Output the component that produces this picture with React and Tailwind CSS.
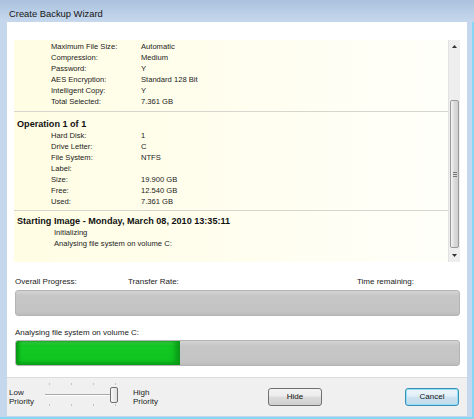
export default function App() {
  const top = [
    ["Maximum File Size:", "Automatic"],
    ["Compression:", "Medium"],
    ["Password:", "Y"],
    ["AES Encryption:", "Standard 128 Bit"],
    ["Intelligent Copy:", "Y"],
    ["Total Selected:", "7.361 GB"],
  ];
  const op = [
    ["Hard Disk:", "1"],
    ["Drive Letter:", "C"],
    ["File System:", "NTFS"],
    ["Label:", ""],
    ["Size:", "19.900 GB"],
    ["Free:", "12.540 GB"],
    ["Used:", "7.361 GB"],
  ];
  const Row = ({ l, v }) => (
    <div className="grid grid-cols-[90px_1fr] pl-[37px] h-[11px] leading-[11px]">
      <span>{l}</span>
      <span>{v}</span>
    </div>
  );
  return (
    <div className="relative w-[474px] h-[419px] overflow-hidden bg-[#c4d7ed] shadow-[inset_-2px_-2px_0_#86d8f3] font-['Liberation_Sans',Arial,sans-serif] text-[#1b1b1b]">
      <div className="h-[22px] pt-[8px] pl-[9px] text-[9.4px] leading-[12px] text-[#151515] bg-[linear-gradient(to_bottom,#aac2df,#c6d8ed)]">
        Create Backup Wizard
      </div>
      <div className="ml-[7px] w-[460px] h-[394px] bg-white flex flex-col">
        {/* details pane */}
        <div className="pt-[18px] pl-[7px] pr-[7px]">
          <div className="flex h-[222px]">
            <div className="flex-1 bg-[linear-gradient(to_right,#fffde3,#fffffa)] text-[7.6px] text-[#222]">
              <div className="pt-[1px]">
                {top.map(([l, v]) => (
                  <Row key={l} l={l} v={v} />
                ))}
              </div>
              <div className="mt-[4px] h-px bg-[#d6d6cf]" />
              <div className="pt-[7px] pl-[3px] h-[18px] leading-[11px] font-bold text-[9.1px] text-[#111]">
                Operation 1 of 1
              </div>
              {op.map(([l, v]) => (
                <Row key={l} l={l} v={v} />
              ))}
              <div className="mt-[3px] h-px bg-[#d6d6cf]" />
              <div className="pt-[5px] pl-[3px] h-[16px] leading-[11px] font-bold text-[9.1px] text-[#111]">
                Starting Image - Monday, March 08, 2010 13:35:11
              </div>
              <div className="pl-[40px] h-[11px] leading-[11px] text-[#222]">Initializing</div>
              <div className="pl-[40px] h-[11px] leading-[11px] text-[#222]">Analysing file system on volume C:</div>
            </div>
            {/* scrollbar */}
            <div className="w-[12px] flex flex-col bg-[#eeeeee] border-l border-[#e2e2e2]">
              <div className="h-[12px] flex items-center justify-center">
                <svg width="5" height="3" viewBox="0 0 5 3"><path d="M0 3 L2.5 0 L5 3 Z" fill="#333" /></svg>
              </div>
              <div className="flex-1 flex flex-col justify-end">
                <div className="h-[148px] mx-[1px] rounded-[2px] border border-[#9a9a9a] bg-[linear-gradient(to_right,#f4f4f4,#dadada,#cfcfcf)] flex items-center justify-center">
                  <div className="flex flex-col gap-[1px]">
                    <div className="w-[4px] h-px bg-[#777]" />
                    <div className="w-[4px] h-px bg-[#777]" />
                    <div className="w-[4px] h-px bg-[#777]" />
                  </div>
                </div>
              </div>
              <div className="h-[14px] flex items-center justify-center">
                <svg width="5" height="3" viewBox="0 0 5 3"><path d="M0 0 L2.5 3 L5 0 Z" fill="#333" /></svg>
              </div>
            </div>
          </div>
        </div>
        {/* progress */}
        <div className="pl-[8px] pr-[7px] text-[8px] text-[#222]">
          <div className="mt-[14px] h-[12px] leading-[12px] flex">
            <span className="w-[113px]">Overall Progress:</span>
            <span>Transfer Rate:</span>
            <span className="ml-auto mr-[46px]">Time remaining:</span>
          </div>
          <div className="mt-[2px] h-[26px] rounded-[3px] border border-[#b4b4b4] bg-[linear-gradient(to_bottom,#d4d4d4,#c6c6c6_20%,#c4c4c4_85%,#bcbcbc)]" />
          <div className="mt-[11px] h-[12px] leading-[12px]">Analysing file system on volume C:</div>
          <div className="mt-[1px] h-[26px] rounded-[3px] border border-[#b4b4b4] bg-[linear-gradient(to_bottom,#d4d4d4,#c6c6c6_20%,#c4c4c4_85%,#bcbcbc)] overflow-hidden">
            <div
              className="h-full rounded-l-[2px] bg-[linear-gradient(to_bottom,#4fd85a,#13c724_18%,#10c420_80%,#0ca61a)] shadow-[inset_3px_0_3px_#0a9a17,inset_-5px_0_5px_#0a9a17]"
              style={{ width: "164px" }}
            />
          </div>
        </div>
        {/* bottom panel */}
        <div className="mt-[11px] h-[39px] border-t border-[#dcdcdc] bg-[#f0f0f0] flex items-center pl-[2px] pr-[8px] text-[8px] text-[#222]">
          <div className="w-[35px] leading-[9px]">
            <div>Low</div>
            <div>Priority</div>
          </div>
          <svg width="76" height="28" viewBox="0 0 76 28">
            <g stroke="#c4c4c4" strokeWidth="1">
              <line x1="5.5" y1="0" x2="5.5" y2="2" />
              <line x1="27.5" y1="0" x2="27.5" y2="2" />
              <line x1="49.5" y1="0" x2="49.5" y2="2" />
              <line x1="71.5" y1="0" x2="71.5" y2="2" />
              <line x1="5.5" y1="21" x2="5.5" y2="23" />
              <line x1="27.5" y1="21" x2="27.5" y2="23" />
              <line x1="49.5" y1="21" x2="49.5" y2="23" />
              <line x1="71.5" y1="21" x2="71.5" y2="23" />
            </g>
            <line x1="1" y1="11.5" x2="72" y2="11.5" stroke="#a8a8a8" />
            <line x1="1" y1="12.5" x2="72" y2="12.5" stroke="#ffffff" />
            <defs>
              <linearGradient id="th" x1="0" y1="0" x2="1" y2="0">
                <stop offset="0" stopColor="#fbfbfb" />
                <stop offset="1" stopColor="#dcdcdc" />
              </linearGradient>
            </defs>
            <rect x="66.5" y="4.5" width="7" height="15" rx="1.5" fill="url(#th)" stroke="#6f6f6f" />
          </svg>
          <div className="ml-[13px] leading-[9px]">
            <div>High</div>
            <div>Priority</div>
          </div>
          <div className="ml-auto flex gap-[83px]">
            <button className="w-[54px] h-[18px] rounded-[3px] border border-[#707070] bg-[linear-gradient(to_bottom,#f4f4f4,#ebebeb_45%,#dcdcdc_50%,#cfcfcf)] text-[8px] leading-[16px] text-[#111] text-center">
              Hide
            </button>
            <button className="w-[54px] h-[18px] rounded-[3px] border border-[#3c8fb6] bg-[linear-gradient(to_bottom,#eef6fb,#e0eef7_45%,#cfe3f0_50%,#c2dbec)] shadow-[inset_0_0_0_1px_#8fe0f7] text-[8px] leading-[14px] text-[#111] text-center">
              Cancel
            </button>
          </div>
        </div>
      </div>
    </div>
  );
}
